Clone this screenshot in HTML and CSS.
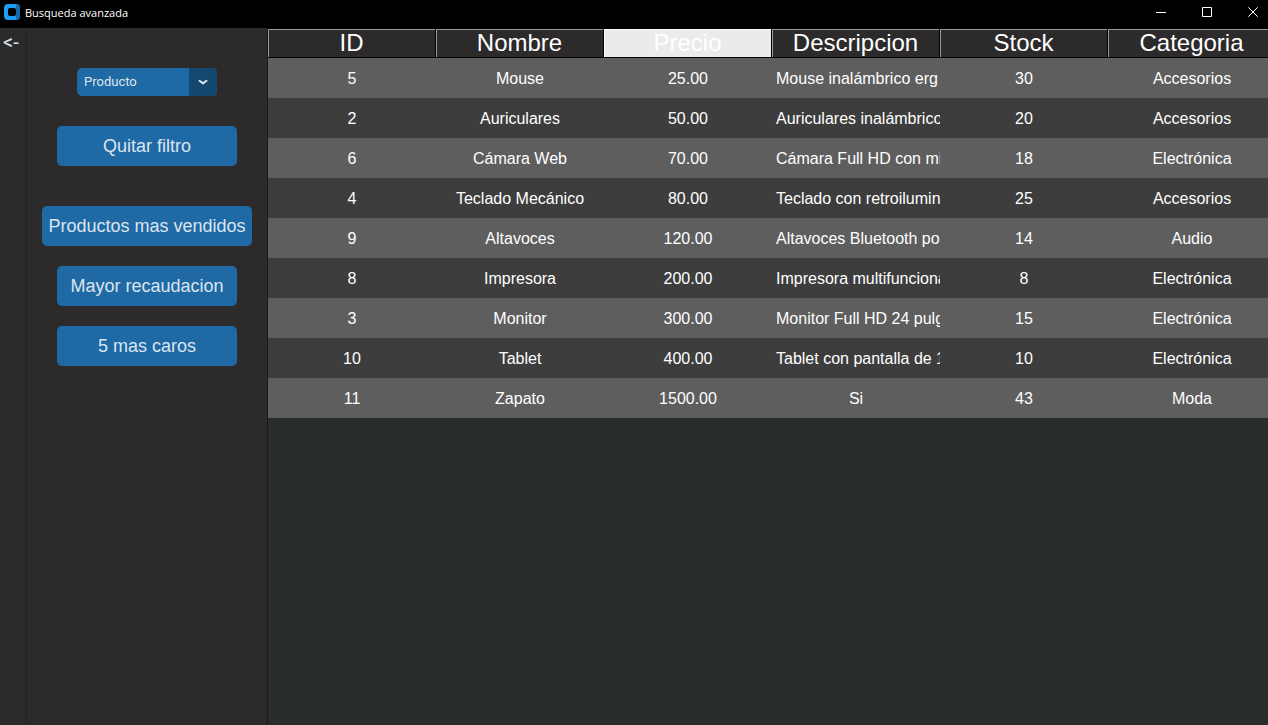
FILE: index.html
```html
<!DOCTYPE html>
<html lang="es">
<head>
<meta charset="utf-8">
<title>Busqueda avanzada</title>
<link rel="stylesheet" href="styles.css">
</head>
<body>
<header class="titlebar">
  <svg class="logo" width="16" height="16" viewBox="0 0 16 16" aria-hidden="true">
    <rect width="16" height="16" rx="4" fill="#1c9cf4"/>
    <path d="M12 0a4 4 0 0 1 4 4v8a4 4 0 0 1-4 4z" fill="#1668ae"/>
    <rect x="4" y="4" width="8" height="8" rx="2" fill="#000"/>
  </svg>
  <h1 class="title">Busqueda avanzada</h1>
  <div class="controls">
    <button class="control" type="button" aria-label="Minimizar"><svg width="10" height="10" viewBox="0 0 10 10"><path d="M0 5.5h10"/></svg></button>
    <button class="control" type="button" aria-label="Maximizar"><svg width="10" height="10" viewBox="0 0 10 10"><path d="M.5.5h9v9h-9z"/></svg></button>
    <button class="control" type="button" aria-label="Cerrar"><svg width="10" height="10" viewBox="0 0 10 10"><path d="M.3.3l9.4 9.4M9.7.3L.3 9.7"/></svg></button>
  </div>
</header>
<main class="window">
  <nav class="rail"><button class="back" type="button" aria-label="Volver">&lt;-</button></nav>
  <aside class="filters">
    <div class="picker">
      <select class="select" aria-label="Filtro"><option>Producto</option></select>
      <span class="arrow"><svg width="10" height="6" viewBox="0 0 10 6" aria-hidden="true"><path d="M1.5 1.8L5 4.4l3.5-2.6"/></svg></span>
    </div>
    <button class="button clear" type="button">Quitar filtro</button>
    <button class="button wide" type="button">Productos mas vendidos</button>
    <button class="button" type="button">Mayor recaudacion</button>
    <button class="button" type="button">5 mas caros</button>
  </aside>
  <section class="results">
    <table class="table">
      <thead>
        <tr><th>ID</th><th>Nombre</th><th class="active">Precio</th><th>Descripcion</th><th>Stock</th><th>Categoria</th></tr>
      </thead>
      <tbody>
        <tr><td>5</td><td>Mouse</td><td>25.00</td><td class="clip">Mouse inalámbrico erg</td><td>30</td><td>Accesorios</td></tr>
        <tr><td>2</td><td>Auriculares</td><td>50.00</td><td class="clip">Auriculares inalámbrico</td><td>20</td><td>Accesorios</td></tr>
        <tr><td>6</td><td>Cámara Web</td><td>70.00</td><td class="clip">Cámara Full HD con mi</td><td>18</td><td>Electrónica</td></tr>
        <tr><td>4</td><td>Teclado Mecánico</td><td>80.00</td><td class="clip">Teclado con retroilumin</td><td>25</td><td>Accesorios</td></tr>
        <tr><td>9</td><td>Altavoces</td><td>120.00</td><td class="clip">Altavoces Bluetooth po</td><td>14</td><td>Audio</td></tr>
        <tr><td>8</td><td>Impresora</td><td>200.00</td><td class="clip">Impresora multifunciona</td><td>8</td><td>Electrónica</td></tr>
        <tr><td>3</td><td>Monitor</td><td>300.00</td><td class="clip">Monitor Full HD 24 pulg</td><td>15</td><td>Electrónica</td></tr>
        <tr><td>10</td><td>Tablet</td><td>400.00</td><td class="clip">Tablet con pantalla de 1</td><td>10</td><td>Electrónica</td></tr>
        <tr><td>11</td><td>Zapato</td><td>1500.00</td><td>Si</td><td>43</td><td>Moda</td></tr>
      </tbody>
    </table>
  </section>
</main>
</body>
</html>
```

FILE: styles.css
```css
* {
  box-sizing: border-box;
}

body {
  margin: 0;
  min-height: 100vh;
  display: flex;
  flex-direction: column;
  background: #2b2b2b;
  color: #fff;
  font-family: "Liberation Sans", Arial, sans-serif;
  overflow-x: hidden;
}

button,
select {
  margin: 0;
  padding: 0;
  border: 0;
  font: inherit;
  color: inherit;
  background: none;
}

.titlebar {
  display: flex;
  align-items: center;
  height: 28px;
  padding: 0 0 4px 4px;
  background: #000;
}

.title {
  margin: 2px 0 0 5px;
  font: 400 11px/16px "Open Sans", "Noto Sans", sans-serif;
}

.controls {
  display: flex;
  gap: 16px;
  margin-left: auto;
}

.control {
  display: flex;
  align-items: center;
  justify-content: center;
  width: 30px;
  height: 24px;
}

.control svg {
  fill: none;
  stroke: #fff;
  stroke-width: 1;
}

.window {
  flex: 1;
  display: flex;
}

.rail {
  width: 27px;
  border-right: 1px solid #222;
}

.back {
  display: block;
  padding-left: 3px;
  height: 28px;
  font: 20px/28px Roboto, sans-serif;
  color: #dce4ee;
}

.filters {
  width: 241px;
  display: flex;
  flex-direction: column;
  align-items: center;
  gap: 20px;
  padding-top: 40px;
  background: #2c2a2a;
  border-right: 1px solid #1a1a1a;
}

.picker {
  position: relative;
  width: 140px;
  height: 28px;
  margin-bottom: 10px;
  border-radius: 5px;
  overflow: hidden;
}

.select {
  appearance: none;
  width: 100%;
  height: 28px;
  padding: 0 28px 0 7px;
  font: 13px/28px Roboto, sans-serif;
  color: #dce4ee;
  background: #1f6aa5;
}

.arrow {
  position: absolute;
  top: 0;
  right: 0;
  display: flex;
  align-items: center;
  justify-content: center;
  width: 28px;
  height: 28px;
  background: #144870;
  pointer-events: none;
}

.arrow svg {
  fill: none;
  stroke: #dce4ee;
  stroke-width: 2;
  stroke-linecap: round;
  stroke-linejoin: round;
}

.button {
  width: 180px;
  height: 40px;
  border-radius: 5px;
  font-size: 18px;
  color: #dce4ee;
  background: #1f6aa5;
}

.clear {
  margin-bottom: 20px;
}

.wide {
  width: 210px;
}

.results {
  flex: 1;
  min-width: 0;
  overflow: hidden;
  background: #2a2d2e;
}

.table {
  width: 100%;
  min-width: 1008px;
  table-layout: fixed;
  border-collapse: separate;
  border-spacing: 0;
  text-align: center;
}

th {
  height: 30px;
  padding: 0;
  border: 1px solid #000;
  border-width: 1px 1px 1px 0;
  box-shadow: inset 1px 1px #999;
  background: #2c2a2a;
  font-size: 24px;
  font-weight: 400;
  line-height: 28px;
}

.active {
  background: #ebebeb;
  box-shadow: inset 1px 1px #fff;
}

td {
  height: 40px;
  padding: 2px 0 0;
  font-size: 16px;
  background: #3d3d3d;
}

tr:nth-child(odd) td {
  background: #5e5e5e;
}

.clip {
  padding-left: 4px;
  overflow: hidden;
  text-align: left;
  white-space: nowrap;
}
```
